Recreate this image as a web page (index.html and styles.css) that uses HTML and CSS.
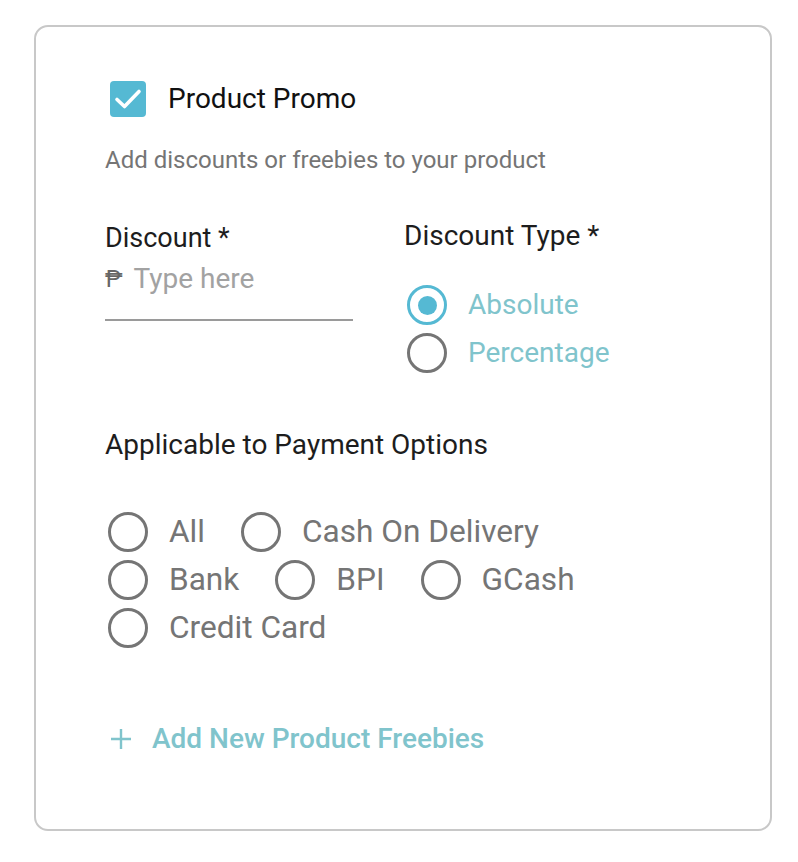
FILE: index.html
```html
<!DOCTYPE html>
<html lang="en">
<head>
    <meta charset="UTF-8">
    <title>Product Promo</title>
    <link rel="stylesheet" href="styles.css">
</head>
<body>
    <div class="card">
        <!-- 見出し -->
        <div class="promo-head">
            <span class="checkbox">
                <svg width="28" height="22" viewBox="0 0 28 22"><path d="M3 11.5l7.5 7L25 3.5" fill="none" stroke="#fff" stroke-width="3.6" stroke-linecap="round" stroke-linejoin="round"/></svg>
            </span>
            <span class="promo-title">Product Promo</span>
        </div>
        <div class="promo-sub">Add discounts or freebies to your product</div>

        <!-- 割引 -->
        <div class="discount-row">
            <div class="discount-field">
                <div class="field-label discount-label">Discount *</div>
                <div class="text-input">
                    <span class="peso">₱</span>
                    <span class="placeholder">Type here</span>
                </div>
            </div>
            <div class="discount-type">
                <div class="field-label">Discount Type *</div>
                <div class="type-options">
                    <div class="option">
                        <span class="radio checked"></span>
                        <span class="option-label teal">Absolute</span>
                    </div>
                    <div class="option">
                        <span class="radio"></span>
                        <span class="option-label teal">Percentage</span>
                    </div>
                </div>
            </div>
        </div>

        <!-- 支払い方法 -->
        <div class="field-label payment-label">Applicable to Payment Options</div>
        <div class="payment-options">
            <div class="option"><span class="radio"></span><span class="option-label">All</span></div>
            <div class="option"><span class="radio"></span><span class="option-label">Cash On Delivery</span></div>
            <div class="option"><span class="radio"></span><span class="option-label">Bank</span></div>
            <div class="option"><span class="radio"></span><span class="option-label">BPI</span></div>
            <div class="option"><span class="radio"></span><span class="option-label">GCash</span></div>
            <div class="option"><span class="radio"></span><span class="option-label">Credit Card</span></div>
        </div>

        <div class="add-freebies">
            <svg width="22" height="22" viewBox="0 0 22 22"><path d="M11 1v20M1 11h20" stroke="#80c4cc" stroke-width="2.4"/></svg>
            <span>Add New Product Freebies</span>
        </div>
    </div>
</body>
</html>
```

FILE: styles.css
```css
/* 全体 */
body {
    font-family: Roboto, 'Liberation Sans', sans-serif;
    background-color: #fff;
    margin: 0;
    padding: 0;
}

.card {
    width: 665px;
    height: 748px;
    margin: 25px 0 0 34px;
    padding: 54px 0 0 69px;
    border: 2px solid #c8c8c8;
    border-radius: 14px;
}

.promo-head {
    display: flex;
    align-items: center;
    gap: 22px;
    margin-left: 5px;
}

.checkbox {
    width: 36px;
    height: 36px;
    border-radius: 4px;
    background-color: #55b9d3;
    display: flex;
    align-items: center;
    justify-content: center;
}

.promo-title {
    font-size: 28px;
    line-height: 36px;
    color: #111;
}

.promo-sub {
    margin-top: 29px;
    font-size: 24px;
    line-height: 28px;
    color: #757575;
}

.discount-row {
    display: flex;
    gap: 51px;
    margin-top: 48px;
}

.discount-field {
    width: 248px;
    padding-top: 2px;
}

.field-label {
    font-size: 28px;
    line-height: 28px;
    color: #1d1d1d;
}

.discount-label {
    font-size: 27px;
}

.text-input {
    margin-top: 13px;
    display: flex;
    align-items: center;
    gap: 11px;
    font-size: 28px;
    line-height: 28px;
    padding-bottom: 26px;
    border-bottom: 2px solid #9a9a9a;
}

.peso {
    color: #666;
    font-size: 24px;
}

.placeholder {
    color: #a2a2a2;
}

.type-options {
    margin-top: 35px;
    display: flex;
    flex-direction: column;
    gap: 8px;
}

.option {
    display: flex;
    align-items: center;
    gap: 21px;
    margin-left: 3px;
}

.radio {
    flex-shrink: 0;
    width: 40px;
    height: 40px;
    box-sizing: border-box;
    border: 3.5px solid #757575;
    border-radius: 50%;
    display: flex;
    align-items: center;
    justify-content: center;
}

.radio.checked {
    border-color: #55b9d3;
}

.radio.checked::after {
    content: "";
    width: 19px;
    height: 19px;
    border-radius: 50%;
    background-color: #55b9d3;
}

.option-label {
    font-size: 28px;
    line-height: 32px;
    color: #757575;
}

.option-label.teal {
    color: #80c4cc;
}

.payment-label {
    margin-top: 58px;
}

.payment-options {
    margin-top: 53px;
    width: 560px;
    display: flex;
    flex-wrap: wrap;
    column-gap: 33px;
    row-gap: 8px;
}

.payment-options .option {
    gap: 21px;
}

.payment-options .option-label {
    font-size: 31.6px;
}

.add-freebies {
    margin-top: 77px;
    margin-left: 5px;
    display: flex;
    align-items: center;
    gap: 20px;
    font-size: 28px;
    line-height: 28px;
    font-weight: 500;
    color: #80c4cc;
}
```
